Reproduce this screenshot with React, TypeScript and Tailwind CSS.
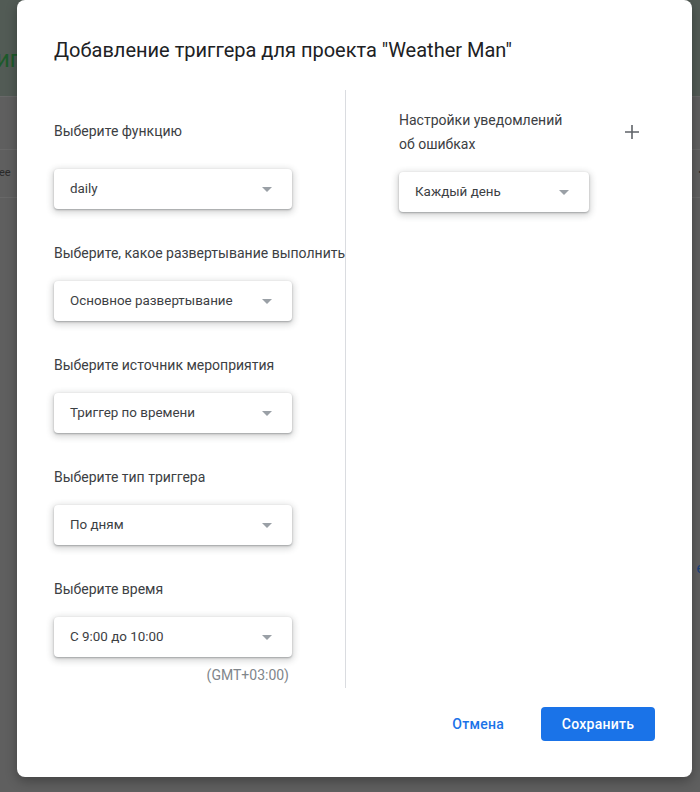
const leftFields = [
  { label: "Выберите, какое развертывание выполнить", value: "Основное развертывание" },
  { label: "Выберите источник мероприятия", value: "Триггер по времени" },
  { label: "Выберите тип триггера", value: "По дням" },
  { label: "Выберите время", value: "С 9:00 до 10:00" },
];

function Select({ value, className }: { value: string; className: string }) {
  return (
    <div
      className={`flex h-[40px] items-center justify-between rounded-[4px] bg-white pl-[16px] pr-[20px] text-[13.4px] text-[#3c4043] shadow-[0_1px_2px_rgba(60,64,67,0.38),0_2px_6px_2px_rgba(60,64,67,0.2)] ${className}`}
    >
      <span>{value}</span>
      <svg width="10" height="5" viewBox="0 0 10 5" className="fill-[#9aa0a6]">
        <path d="M0 0h10L5 5z" />
      </svg>
    </div>
  );
}

export default function App() {
  return (
    <div className="relative h-[792px] w-[700px] overflow-hidden bg-[#5f5f5f] font-['Roboto',sans-serif]">
      {/* page behind the dialog */}
      <div className="flex h-[97px] items-center border-b border-[#686868] bg-[#525b55]">
        <span className="ml-[-4px] mt-[22px] text-[24px] text-[#1d5a2a]">иг</span>
      </div>
      <div className="flex h-[53px] border-b border-[#686868]" />
      <div className="flex h-[48px] items-center justify-between border-b border-[#686868] text-[11px] text-[#2a2a2a]">
        <span className="ml-[-1px]">ee</span>
        <span className="mr-[-2px]">•</span>
      </div>
      <div className="flex justify-end pt-[360px] text-[14px] text-[#1a3f7a]">
        <span className="mr-[-4px]">е</span>
      </div>

      {/* dialog */}
      <div className="absolute left-[17px] top-0 flex h-[777px] w-[675px] flex-col rounded-[8px] bg-white shadow-[0_4px_12px_rgba(0,0,0,0.3)]">
        <h1 className="pl-[37px] pt-[36px] text-[20px] leading-[28px] text-[#202124]">
          Добавление триггера для проекта "Weather Man"
        </h1>

        <div className="mt-[26px] flex">
          <div className="h-[598px] w-[329px] border-r border-[#dadce0] pl-[37px] pt-[31px]">
            <div className="whitespace-nowrap text-[14px] leading-[20px] text-[#3c4043]">Выберите функцию</div>
            <Select value="daily" className="mt-[28px] w-[238px]" />
            {leftFields.map((f) => (
              <div key={f.label}>
                <div className="mt-[34px] whitespace-nowrap text-[14px] leading-[20px] text-[#3c4043]">{f.label}</div>
                <Select value={f.value} className="mt-[18px] w-[238px]" />
              </div>
            ))}
            <div className="mt-[8px] w-[235px] text-right text-[14px] leading-[20px] text-[#80868b]">(GMT+03:00)</div>
          </div>

          <div className="flex-1 pl-[53px] pr-[53px] pt-[18px]">
            <div className="flex items-center justify-between">
              <div className="text-[14px] leading-[24px] text-[#3c4043]">
                Настройки уведомлений
                <br />
                об ошибках
              </div>
              <svg width="14" height="14" viewBox="0 0 14 14" className="stroke-[#5f6368]">
                <path d="M7 0v14M0 7h14" strokeWidth="1.6" />
              </svg>
            </div>
            <Select value="Каждый день" className="mt-[16px] w-[190px]" />
          </div>
        </div>

        <div className="mt-[19px] flex items-center justify-end gap-[21px] pr-[37px]">
          <button className="h-[34px] px-[16px] text-[14px] font-medium tracking-[0.25px] text-[#1a73e8]">Отмена</button>
          <button className="h-[34px] w-[114px] rounded-[4px] bg-[#1a73e8] text-[14px] font-medium tracking-[0.25px] text-white">
            Сохранить
          </button>
        </div>
      </div>
    </div>
  );
}
